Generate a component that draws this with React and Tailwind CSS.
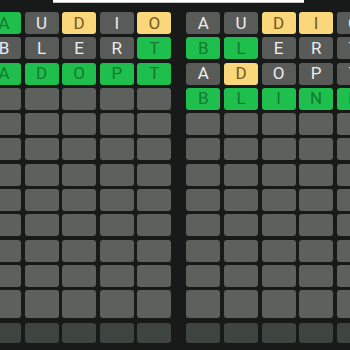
const left = [
    [["A", "g"], ["U", "x"], ["D", "y"], ["I", "x"], ["O", "y"]],
    [["B", "x"], ["L", "x"], ["E", "x"], ["R", "x"], ["T", "g"]],
    [["A", "g"], ["D", "g"], ["O", "g"], ["P", "g"], ["T", "g"]],
];

const right = [
    [["A", "x"], ["U", "x"], ["D", "y"], ["I", "y"], ["O", "x"]],
    [["B", "g"], ["L", "g"], ["E", "x"], ["R", "x"], ["T", "x"]],
    [["A", "x"], ["D", "y"], ["O", "x"], ["P", "x"], ["T", "x"]],
    [["B", "g"], ["L", "g"], ["I", "g"], ["N", "g"], ["D", "g"]],
];

const tileColors = {
    g: "bg-[#1fbf4d] text-[#137a31]",
    y: "bg-[#f9d77a] text-[#745a1f]",
    x: "bg-[#595b59] text-[#ececec]",
    e: "bg-[#5c615d]",
    d: "bg-[#3e4440]",
};

function Tile({ letter, kind, tall }) {
    return (
        <div
            className={`${tall ? "h-[28px]" : "h-[22px]"} w-[34px] rounded-[3px] flex items-center justify-center text-[17px] leading-none ${tileColors[kind]}`}
        >
            {letter}
        </div>
    );
}

function Board({ guesses }) {
    const rows = [];
    for (let i = 0; i < 12; i++) {
        rows.push(guesses[i] || [["", "e"], ["", "e"], ["", "e"], ["", "e"], ["", "e"]]);
    }

    return (
        <div className="flex flex-col shrink-0">
            <div className="flex flex-col gap-y-[3.3px]">
                {rows.map((row, i) => (
                    <div className="flex gap-x-[3.6px]" key={i}>
                        {row.map(([letter, kind], j) => (
                            <Tile key={j} letter={letter} kind={kind} tall={i === 11} />
                        ))}
                    </div>
                ))}
            </div>
            <div className="flex gap-x-[3.6px] mt-[4.5px]">
                {[0, 1, 2, 3, 4].map((j) => (
                    <div key={j} className="h-[20px] w-[34px] rounded-[3px] bg-[#3e4440]" />
                ))}
            </div>
        </div>
    );
}

export default function App() {
    return (
        <div
            className="w-[350px] h-[350px] overflow-hidden bg-[#181a19]"
            style={{ fontFamily: "Roboto, 'Liberation Sans', sans-serif" }}
        >
            <div className="h-[12px]">
                <div className="ml-[53px] w-[251px] h-[3px] bg-white border-b border-[#c4c4c4]" />
            </div>
            <div className="flex gap-x-[15px] ml-[-13px]">
                <Board guesses={left} />
                <Board guesses={right} />
            </div>
        </div>
    );
}
